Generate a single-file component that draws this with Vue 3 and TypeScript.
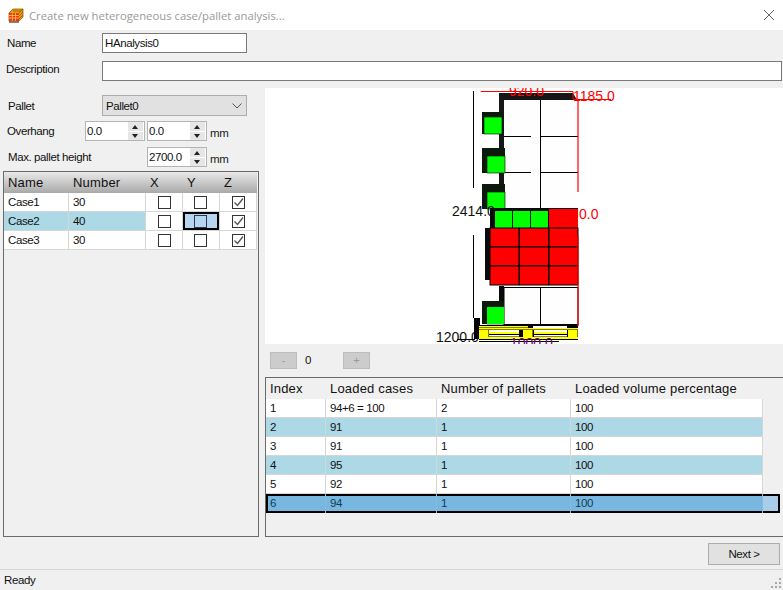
<script setup lang="ts">
const cases = [
  { name: 'Case1', number: 30, z: true, selected: false },
  { name: 'Case2', number: 40, z: true, selected: true },
  { name: 'Case3', number: 30, z: true, selected: false },
]

const solutions = [
  { index: 1, cases: '94+6 = 100', pallets: 2, volume: 100 },
  { index: 2, cases: '91', pallets: 1, volume: 100 },
  { index: 3, cases: '91', pallets: 1, volume: 100 },
  { index: 4, cases: '95', pallets: 1, volume: 100 },
  { index: 5, cases: '92', pallets: 1, volume: 100 },
  { index: 6, cases: '94', pallets: 1, volume: 100 },
]

const overhangs = ['0.0', '0.0']

// viewer boxes, in screenshot coordinates (the svg viewBox starts at 265,88)
const sideGreens = [
  { x: 484, y: 117, back: 112 },
  { x: 487, y: 156, back: 148 },
  { x: 487, y: 192, back: 184 },
  { x: 487, y: 307, back: 301 },
]
const topGreens = [495, 513, 531]
const redCols = [490, 519.5, 549]
const redRows = [228, 247, 266]
const palletBlocks = [479, 523, 568]
</script>

<template>
  <div class="dialog">
    <div class="titlebar">
      <svg class="app-icon" width="16" height="16" viewBox="0 0 16 16">
        <path d="M1 6 L5 2 H15 V10 L11 14 H1 Z" fill="#e8a000" stroke="#7a4a00" stroke-width="0.7" />
        <path d="M1 6 H11 V14 H1 Z" fill="#f03020" />
        <path d="M1 8.5 H11 M1 11 H11 M4.3 6 V14 M7.6 6 V14" stroke="#ffd040" stroke-width="0.8" />
        <path d="M11 6 L15 2 M11 9 L15 5 M11 12 L15 8 M5 4 H13" stroke="#804000" stroke-width="0.6" />
        <path d="M1 15 H11" stroke="#705020" stroke-width="1.4" />
      </svg>
      <span class="title-text">Create new heterogeneous case/pallet analysis...</span>
      <svg class="close-icon" width="12" height="12" viewBox="0 0 12 12">
        <path d="M1 1 L11 11 M11 1 L1 11" stroke="#666" stroke-width="1" />
      </svg>
    </div>

    <div class="field-row name-row">
      <span class="label">Name</span>
      <div class="textbox name-box">HAnalysis0</div>
    </div>
    <div class="field-row desc-row">
      <span class="label desc-label">Description</span>
      <div class="textbox desc-box"></div>
    </div>

    <div class="main">
      <div class="left">
        <div class="field-row pallet-row">
          <span class="label">Pallet</span>
          <div class="combo">
            <span>Pallet0</span>
            <svg width="10" height="6" viewBox="0 0 10 6">
              <path d="M0.5 0.5 L5 5 L9.5 0.5" fill="none" stroke="#555" stroke-width="1" />
            </svg>
          </div>
        </div>
        <div class="field-row overhang-row">
          <span class="label overhang-label">Overhang</span>
          <div v-for="(value, i) in overhangs" :key="i" class="spinner">
            <span class="spin-value">{{ value }}</span>
            <span class="spin-buttons"><i class="up"></i><i class="down"></i></span>
          </div>
          <span class="unit">mm</span>
        </div>
        <div class="field-row height-row">
          <span class="label height-label">Max. pallet height</span>
          <div class="spinner">
            <span class="spin-value">2700.0</span>
            <span class="spin-buttons"><i class="up"></i><i class="down"></i></span>
          </div>
          <span class="unit">mm</span>
        </div>

        <div class="grid case-grid">
          <div class="row head">
            <span>Name</span><span>Number</span><span>X</span><span>Y</span><span>Z</span>
          </div>
          <div v-for="c in cases" :key="c.name" class="row" :class="{ selected: c.selected }">
            <span class="cell blue-cell">{{ c.name }}</span>
            <span class="cell blue-cell">{{ c.number }}</span>
            <span class="cell check-cell"><b class="check"></b></span>
            <span class="cell check-cell y-cell" :class="{ focused: c.selected }"><b class="check"></b></span>
            <span class="cell check-cell">
              <b class="check">
                <svg v-if="c.z" width="11" height="11" viewBox="0 0 11 11">
                  <path d="M1.5 5.5 L4.5 8.5 L10 1.5" fill="none" stroke="#555" stroke-width="1.4" />
                </svg>
              </b>
            </span>
          </div>
        </div>
      </div>

      <div class="right">
        <svg class="viewer" width="518" height="256" viewBox="265 88 518 256">
          <rect x="265" y="88" width="518" height="256" fill="#fff" />

          <!-- upper stack -->
          <path d="M499 93 H573 L577 100 H504 V209 H499 Z" fill="#161616" />
          <rect x="504" y="100" width="73" height="109" fill="#fefefe" />
          <path d="M540.5 100 V209 M504 136.5 H531 M541 136.5 H578 M504 172.5 H531 M541 172.5 H578" stroke="#000" />

          <g v-for="g in sideGreens" :key="g.y">
            <rect x="482" :y="g.back" :width="g.x + 18 - 482" :height="g.y + 17 - g.back" fill="#0c1a0c" />
            <rect :x="g.x" :y="g.y" width="18" height="17" fill="#00ff00" stroke="#000" stroke-width="0.6" />
          </g>

          <!-- middle layer -->
          <rect x="490" y="208" width="88" height="21" fill="#0a0a0a" />
          <rect v-for="x in topGreens" :key="x" :x="x" y="211" width="17" height="17" fill="#00ff00" />
          <rect x="549" y="209" width="29" height="19" fill="#ff0000" />
          <rect x="485" y="228" width="6" height="52" fill="#0a0a0a" />
          <g v-for="y in redRows" :key="y">
            <rect
              v-for="x in redCols"
              :key="x"
              :x="x"
              :y="y"
              width="29"
              height="19"
              fill="#ff0000"
              stroke="#000"
              stroke-width="1"
            />
          </g>

          <!-- lower stack -->
          <rect x="499" y="286" width="5" height="21" fill="#0a0a0a" />
          <rect x="504" y="287.5" width="74" height="37" fill="#fefefe" stroke="#000" />
          <path d="M540.5 288 V324" stroke="#000" />
          <rect x="482" y="301" width="22" height="23" fill="#0c1a0c" />
          <rect x="487" y="307" width="17" height="17" fill="#00ff00" />

          <!-- pallet -->
          <rect x="474" y="318" width="6" height="21" fill="#000" />
          <rect x="479" y="325" width="99" height="15" fill="#000" />
          <rect x="479" y="326" width="49" height="1.5" fill="#ffff00" />
          <rect x="479" y="328" width="99" height="1.5" fill="#ffff00" />
          <rect x="533" y="326" width="34" height="2" fill="#fff" />
          <rect x="489" y="330" width="30" height="2" fill="#fff" />
          <rect x="534" y="330" width="33" height="2" fill="#fff" />
          <rect x="489" y="332" width="30" height="2" fill="#ffff00" />
          <rect x="534" y="332" width="33" height="2" fill="#ffff00" />
          <rect x="489" y="335" width="30" height="1.5" fill="#fff" />
          <rect x="534" y="335" width="33" height="1.5" fill="#fff" />
          <rect v-for="x in palletBlocks" :key="x" :x="x" y="330" width="9.5" height="7" fill="#ffff00" />
          <rect x="479" y="337" width="99" height="2" fill="#ffff00" />
          <rect x="479" y="341" width="80" height="1" fill="#000" />

          <!-- dimensions -->
          <path d="M473.5 91 V188 M473.5 235 V318" stroke="#000" fill="none" />
          <path d="M481 92 V91.5 H573 M573 91.5 V99.5 H611" stroke="#ff0000" fill="none" />
          <path d="M578 100 V192 M578 236 V326" stroke="#ff0000" stroke-width="1.2" fill="none" />
          <text x="509" y="96" class="dim red">920.0</text>
          <text x="573" y="101" class="dim red">1185.0</text>
          <text x="452" y="216" class="dim dark">2414.0</text>
          <text x="579" y="219" class="dim red">0.0</text>
          <text x="436" y="342" class="dim dark">1200.0</text>
          <path d="M457 339.5 H475" stroke="#000" />
          <text x="510" y="348" class="dim purple">1000.0</text>
        </svg>

        <div class="pager">
          <button class="pager-btn">-</button>
          <span class="pager-value">0</span>
          <button class="pager-btn">+</button>
        </div>

        <div class="grid solution-grid">
          <div class="row head">
            <span>Index</span><span>Loaded cases</span><span>Number of pallets</span><span>Loaded volume percentage</span>
          </div>
          <div
            v-for="s in solutions"
            :key="s.index"
            class="row"
            :class="{ alt: s.index % 2 === 0 && s.index < 6, current: s.index === 6 }"
          >
            <span class="cell">{{ s.index }}</span>
            <span class="cell">{{ s.cases }}</span>
            <span class="cell">{{ s.pallets }}</span>
            <span class="cell">{{ s.volume }}</span>
            <span class="tail"></span>
          </div>
        </div>
      </div>
    </div>

    <div class="footer">
      <button class="next">Next &gt;</button>
    </div>

    <div class="statusbar">
      <span>Ready</span>
      <svg class="grip" width="12" height="12" viewBox="0 0 12 12" fill="#a8a8a8">
        <rect x="9" y="1" width="2" height="2" />
        <rect x="5" y="5" width="2" height="2" />
        <rect x="9" y="5" width="2" height="2" />
        <rect x="1" y="9" width="2" height="2" />
        <rect x="5" y="9" width="2" height="2" />
        <rect x="9" y="9" width="2" height="2" />
      </svg>
    </div>
  </div>
</template>

<style>
html,
body {
  margin: 0;
  background: #f0f0f0;
}
</style>

<style scoped>
.dialog {
  width: 783px;
  height: 590px;
  display: flex;
  flex-direction: column;
  overflow: hidden;
  background: #f0f0f0;
  color: #111;
  font-family: 'Liberation Sans', Arial, sans-serif;
  font-size: 11.5px;
  letter-spacing: -0.4px;
}

.titlebar {
  height: 30px;
  flex: none;
  display: flex;
  align-items: center;
  padding: 0 8px;
  background: #fff;
}

.app-icon {
  flex: none;
}

.title-text {
  margin-left: 5px;
  font-family: 'Open Sans', sans-serif;
  font-size: 11.3px;
  letter-spacing: 0;
  color: #999;
}

.close-icon {
  margin-left: auto;
}

.field-row {
  display: flex;
  align-items: center;
}

.label {
  width: 102px;
  flex: none;
  padding-left: 7px;
  box-sizing: border-box;
}

.textbox {
  box-sizing: border-box;
  height: 20px;
  line-height: 18px;
  padding-left: 2px;
  border: 1px solid #7a7a7a;
  background: #fff;
}

.name-row {
  margin-top: 3px;
}

.name-box {
  width: 145px;
}

.desc-row {
  margin-top: 8px;
}

.desc-label {
  padding-left: 6px;
  margin-top: -5px;
}

.desc-box {
  width: 680px;
}

.main {
  height: 449px;
  flex: none;
  margin-top: 7px;
  display: flex;
}

.left {
  width: 265px;
  flex: none;
  box-sizing: border-box;
  display: flex;
  flex-direction: column;
}

.pallet-row {
  margin-top: 7px;
}

.pallet-row .label {
  padding-left: 8px;
}

.combo {
  box-sizing: border-box;
  width: 145px;
  height: 21px;
  display: flex;
  align-items: center;
  justify-content: space-between;
  padding: 0 4px 0 3px;
  border: 1px solid #adadad;
  background: #e1e1e1;
}

.overhang-row {
  margin-top: 5px;
}

.overhang-label {
  width: 85px;
}

.height-row {
  margin-top: 6px;
}

.height-label {
  width: 147px;
  padding-left: 8px;
}

.overhang-row .spinner + .spinner {
  margin-left: 2px;
}

.spinner {
  box-sizing: border-box;
  width: 60px;
  height: 20px;
  display: flex;
  align-items: center;
  justify-content: space-between;
  border: 1px solid #b4b4b4;
  background: #fff;
  padding-left: 1px;
}

.spin-buttons {
  width: 15px;
  height: 18px;
  display: flex;
  flex-direction: column;
  gap: 1px;
  margin-right: 1px;
}

.spin-buttons i {
  flex: 1;
  position: relative;
  background: #e6e6e6;
}

.spin-buttons i::after {
  content: '';
  position: absolute;
  left: 4px;
  border-left: 3.5px solid transparent;
  border-right: 3.5px solid transparent;
}

.spin-buttons .up::after {
  top: 2.5px;
  border-bottom: 4px solid #222;
}

.spin-buttons .down::after {
  top: 2.5px;
  border-top: 4px solid #222;
}

.unit {
  margin-left: 3px;
  margin-top: 3px;
  color: #222;
}

.grid {
  box-sizing: border-box;
  border: 1px solid #6a6a6a;
}

.case-grid {
  margin: 4px 6px 0 3px;
  height: 366px;
}

.row {
  display: grid;
  height: 19px;
  line-height: 18px;
  background: #fff;
}

.case-grid .row {
  width: 253px;
  grid-template-columns: 65px 77px 37px 37px 37px;
}

.row.head {
  height: 21px;
  line-height: 21px;
  background: linear-gradient(#e9e9e9, #a9a9a9);
  font-size: 13px;
  letter-spacing: 0.18px;
  color: #111;
}

.head span {
  padding-left: 4px;
}

.cell {
  box-sizing: border-box;
  padding-left: 4px;
  border-right: 1px solid #d6d6d6;
  border-bottom: 1px solid #d6d6d6;
  overflow: hidden;
  white-space: nowrap;
}

.row.selected .blue-cell {
  background: #add8e6;
}

.check-cell {
  display: flex;
  align-items: center;
  justify-content: center;
  padding-left: 0;
}

.y-cell {
  padding-right: 2px;
}

.check {
  box-sizing: border-box;
  width: 13px;
  height: 13px;
  display: flex;
  align-items: center;
  justify-content: center;
  border: 1px solid #333;
  background: #fff;
}

.check svg {
  display: block;
}

.focused {
  background: #b5d5f1;
  box-shadow: inset 0 0 0 2px #000;
}

.focused .check {
  background: #b5d5f1;
  border-color: #335;
}

.right {
  flex: 1;
  min-width: 0;
  display: flex;
  flex-direction: column;
}

.viewer {
  display: block;
  flex: none;
}

.pager {
  height: 33px;
  flex: none;
  display: flex;
  align-items: center;
  padding-left: 5px;
  box-sizing: border-box;
  padding-bottom: 1px;
}

.pager-btn {
  width: 27px;
  height: 17px;
  padding: 0;
  border: 1px solid #bcbcbc;
  background: #cccccc;
  color: #999;
  font-family: inherit;
  font-size: 11px;
  line-height: 14px;
}

.pager-value {
  width: 46px;
  padding-left: 8px;
  box-sizing: border-box;
}

.solution-grid {
  height: 160px;
  border-right: none;
}

.solution-grid .row {
  width: 514px;
  grid-template-columns: 60px 111px 134px 192px 1fr;
  background: transparent;
}

.solution-grid .head {
  width: 497px;
  grid-template-columns: 60px 111px 134px 192px;
}

.solution-grid .row:not(.head):not(.current) {
  width: 497px;
  grid-template-columns: 60px 111px 134px 192px;
  background: #fff;
}

.solution-grid .row.alt:not(.head):not(.current) {
  background: #add8e6;
}

.solution-grid .row.current {
  background: linear-gradient(to right, #78b8e0 497px, #a9cce9 497px);
  box-shadow: inset 0 0 0 2px #000;
  color: #123a55;
}

.solution-grid .current .cell {
  border-bottom: none;
  border-right-color: #82bbdd;
}

.footer {
  height: 32px;
  flex: none;
  display: flex;
  justify-content: flex-end;
  align-items: flex-start;
  padding: 6px 3px 0 0;
  box-sizing: border-box;
}

.next {
  width: 72px;
  height: 22px;
  padding: 0;
  border: 1px solid #adadad;
  background: #e1e1e1;
  color: #111;
  font-family: inherit;
  font-size: 11.5px;
  letter-spacing: -0.4px;
}

.statusbar {
  flex: 1;
  display: flex;
  align-items: center;
  justify-content: space-between;
  padding: 0 1px 0 4px;
  border-top: 1px solid #d7d7d7;
}

.grip {
  align-self: flex-end;
  margin-bottom: 1px;
}

.dim {
  font-family: 'Liberation Sans', Arial, sans-serif;
  font-size: 14px;
  letter-spacing: 0;
}

.red {
  fill: #ff0000;
}

.dark {
  fill: #111;
}

.purple {
  fill: #700070;
}
</style>
